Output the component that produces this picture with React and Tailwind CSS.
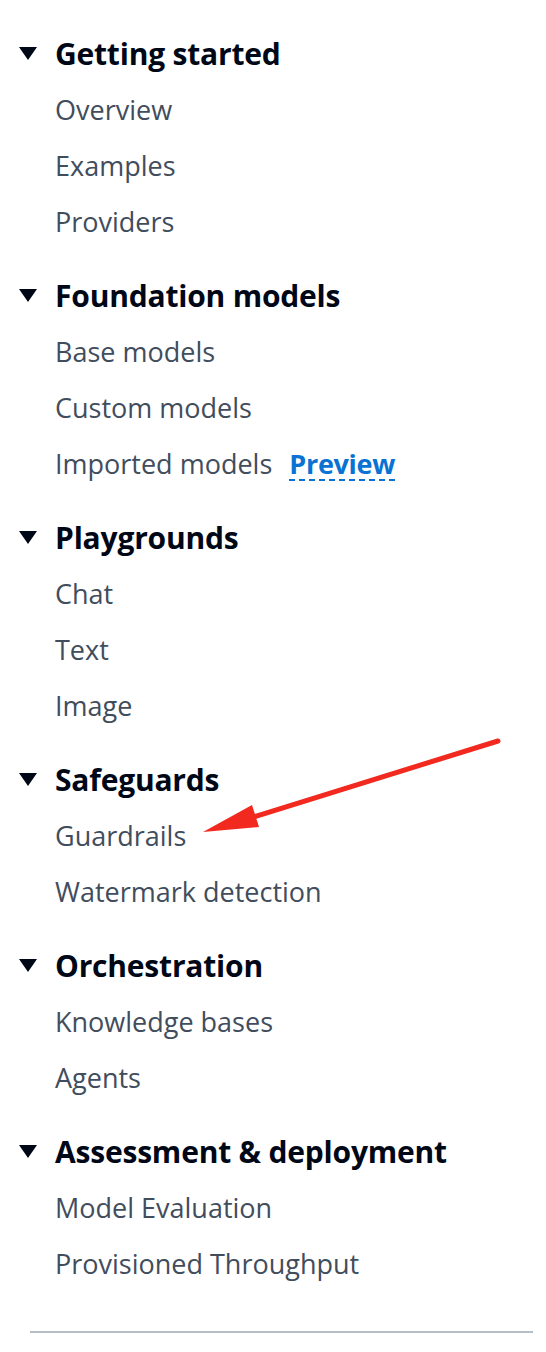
const sections = [
    { title: "Getting started", items: ["Overview", "Examples", "Providers"] },
    { title: "Foundation models", items: ["Base models", "Custom models", "Imported models"] },
    { title: "Playgrounds", items: ["Chat", "Text", "Image"] },
    { title: "Safeguards", items: ["Guardrails", "Watermark detection"] },
    { title: "Orchestration", items: ["Knowledge bases", "Agents"] },
    { title: "Assessment & deployment", items: ["Model Evaluation", "Provisioned Throughput"] },
];

function Caret() {
    return (
        <svg width="20" height="15" viewBox="0 0 20 15" className="shrink-0">
            <path d="M1 1 L19 1 L10 14 Z" fill="#000716" />
        </svg>
    );
}

export default function App() {
    return (
        <div
            className="relative min-h-[1352px] w-[546px] bg-white pt-[25px]"
            style={{ fontFamily: '"Open Sans", "Noto Sans", sans-serif' }}
        >
            {sections.map((s) => (
                <div key={s.title} className="mb-[17px]">
                    <div className="flex h-[57px] items-center gap-[17px] pl-[18px]">
                        <Caret />
                        <span className="text-[30px] font-bold tracking-[-0.2px] text-[#000716]">{s.title}</span>
                    </div>
                    {s.items.map((item) => (
                        <div key={item} className="flex h-[56px] items-center pl-[55px] pt-[1px] text-[27px] text-[#414d5c]">
                            {item}
                            {item === "Imported models" && (
                                <span className="ml-[17px] border-b-2 border-dashed border-[#0972d3] font-bold leading-[30px] tracking-[-0.3px] text-[#0972d3]">
                                    Preview
                                </span>
                            )}
                        </div>
                    ))}
                </div>
            ))}

            <div className="ml-[30px] mr-[13px] mt-[39px] border-t-2 border-[#b6bec9]" />

            <svg className="pointer-events-none absolute left-0 top-0" width="546" height="1352">
                <line x1="498" y1="741" x2="250" y2="818" stroke="#f2291f" strokeWidth="5" strokeLinecap="round" />
                <polygon points="203,832 252,805 259,827" fill="#f2291f" />
            </svg>
        </div>
    );
}
